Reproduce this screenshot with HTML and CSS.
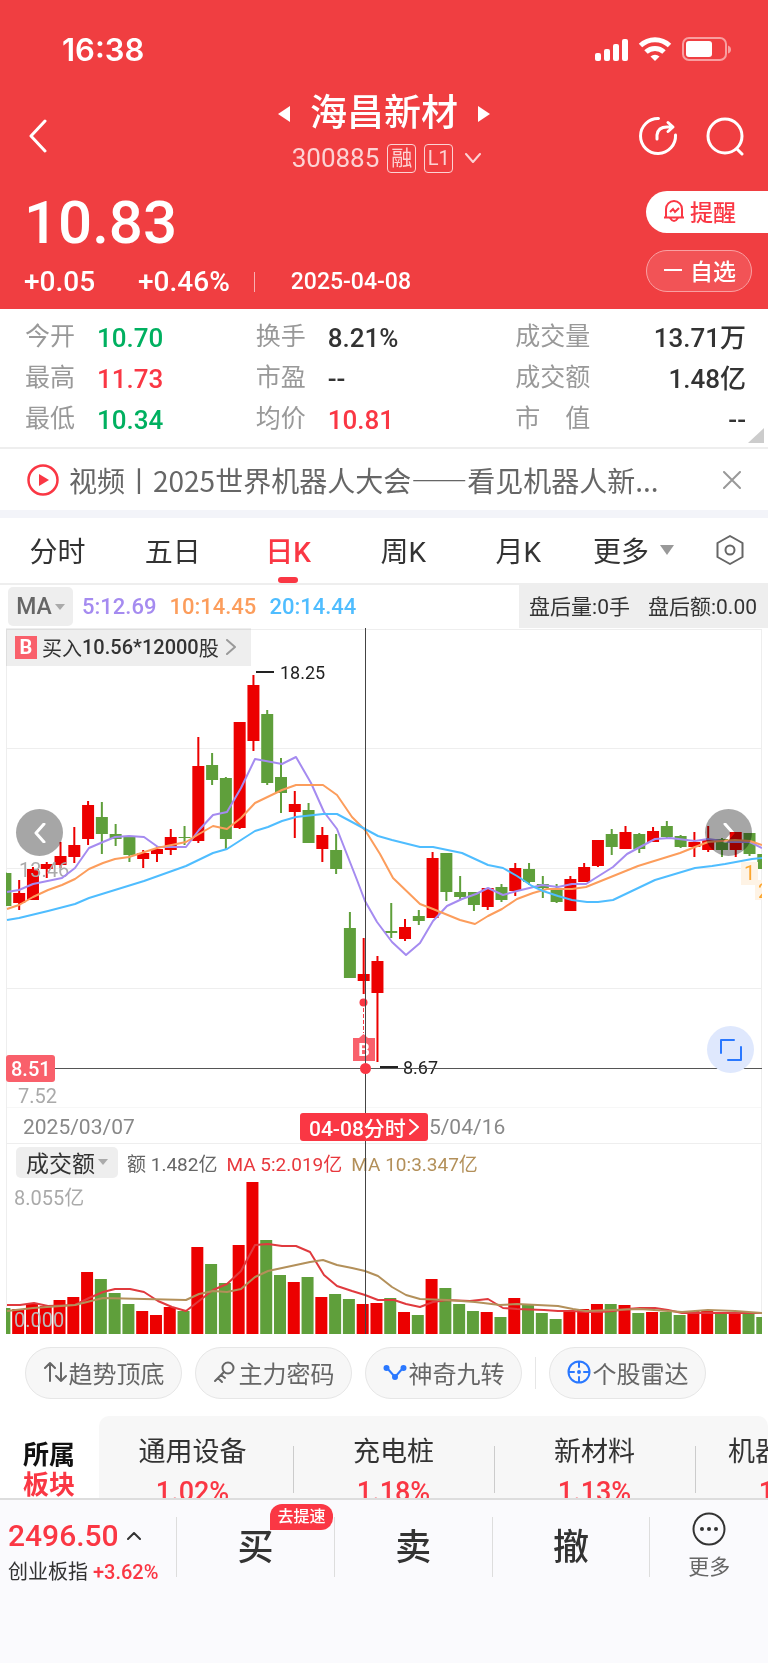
FILE: index.html
```html
<!DOCTYPE html>
<html lang="zh-CN">

<head>
    <meta charset="UTF-8">
    <meta name="viewport" content="width=device-width, initial-scale=1.0">
    <link rel="stylesheet" href="styles.css">
    <title>海昌新材 300885</title>
</head>

<body>
    <header class="top">
        <div class="status">
            <span class="clock">16:38</span>
            <svg class="status-icons" width="138" height="28" viewBox="0 0 138 28" fill="#fff">
                <rect x="1" y="18" width="6" height="8" rx="2" />
                <rect x="10" y="14" width="6" height="12" rx="2" />
                <rect x="19" y="9" width="6" height="17" rx="2" />
                <rect x="28" y="4" width="6" height="22" rx="2" />
                <g fill="none" stroke="#fff" stroke-width="5">
                    <path d="M46.500 10.500a21 21 0 0 1 29 0" />
                    <path d="M52 17a13 13 0 0 1 18 0" />
                </g>
                <path d="M56.500 21.500a7 7 0 0 1 9 0l-4.500 4.500z" />
                <rect x="89" y="3" width="43" height="22" rx="6" fill="none" stroke="#fff" stroke-opacity=".5" stroke-width="2" />
                <rect x="92" y="6" width="26" height="16" rx="3" />
                <path d="M134 10.500v8q3-1 3-4t-3-4z" fill-opacity=".5" />
            </svg>
        </div>

        <nav class="nav">
            <button class="icon-btn back" type="button" aria-label="返回">
                <svg width="20" height="34" viewBox="0 0 20 34"><path d="M17 2L3 17l14 15" /></svg>
            </button>
            <div class="stock">
                <h1>
                    <svg width="14" height="18" viewBox="0 0 14 18"><path d="M13 1v16L1 9z" /></svg>
                    海昌新材
                    <svg width="14" height="18" viewBox="0 0 14 18"><path d="M1 1v16l12-8z" /></svg>
                </h1>
                <div class="code">
                    <span>300885</span>
                    <span class="tag">融</span>
                    <span class="tag tag-l1">L1</span>
                    <svg width="16" height="10" viewBox="0 0 16 10"><path d="M1 1l7 8 7-8" /></svg>
                </div>
            </div>
            <div class="nav-right">
                <button class="icon-btn" type="button" aria-label="分享">
                    <svg width="40" height="40" viewBox="0 0 40 40"><path d="M20.500 2.500A17.500 17.500 0 1 0 37.500 19M19 23v-4q1-8 10-8h5M30 6.500l5 4.500-5 4.500" /></svg>
                </button>
                <button class="icon-btn" type="button" aria-label="搜索">
                    <svg width="40" height="40" viewBox="0 0 40 40"><circle cx="20" cy="20" r="17" /><path d="M32 33l5 5" /></svg>
                </button>
            </div>
        </nav>

        <section class="quote">
            <div>
                <div class="price">10.83</div>
                <div class="change">
                    <span>+0.05</span>
                    <span>+0.46%</span>
                    <time datetime="2025-04-08">2025-04-08</time>
                </div>
            </div>
            <div class="quote-btns">
                <button class="alert-btn" type="button">
                    <svg width="22" height="24" viewBox="0 0 22 24"><path d="M3 18V10a8 8 0 0 1 16 0v8M1 18.500h20M7 19q4 6 8 0M7 13l3-3 2 3 4-4" /></svg>
                    提醒
                </button>
                <button class="watch-btn" type="button"><i></i>自选</button>
            </div>
        </section>
    </header>

    <section class="stats">
        <dl>
            <dt>今开</dt><dd class="green">10.70</dd>
            <dt>最高</dt><dd class="red">11.73</dd>
            <dt>最低</dt><dd class="green">10.34</dd>
        </dl>
        <dl>
            <dt>换手</dt><dd>8.21%</dd>
            <dt>市盈</dt><dd>--</dd>
            <dt>均价</dt><dd class="red">10.81</dd>
        </dl>
        <dl class="wide">
            <dt>成交量</dt><dd>13.71万</dd>
            <dt>成交额</dt><dd>1.48亿</dd>
            <dt>市　值</dt><dd>--</dd>
        </dl>
    </section>

    <section class="news">
        <svg width="32" height="32" viewBox="0 0 32 32"><circle cx="16" cy="16" r="14.500" fill="none" stroke="#fa3744" stroke-width="2.500" /><path d="M12 10v12l10-6z" fill="#fa3744" /></svg>
        <a href="#news">视频丨2025世界机器人大会——看见机器人新...</a>
        <button class="icon-btn" type="button" aria-label="关闭">
            <svg width="18" height="18" viewBox="0 0 18 18"><path d="M1 1l16 16M17 1L1 17" /></svg>
        </button>
    </section>

    <nav class="tabs">
        <button type="button">分时</button>
        <button type="button">五日</button>
        <button type="button" class="active">日K</button>
        <button type="button">周K</button>
        <button type="button">月K</button>
        <button type="button">更多<i class="caret"></i></button>
        <button type="button" aria-label="设置">
            <svg width="30" height="32" viewBox="0 0 30 32"><path d="M15 2l12.500 7v14L15 30 2.500 23V9z" /><circle cx="15" cy="16" r="4.500" /></svg>
        </button>
    </nav>

    <div class="ma-row">
        <button class="pick" type="button">MA<i class="caret small"></i></button>
        <span class="ma5">5:12.69</span>
        <span class="ma10">10:14.45</span>
        <span class="ma20">20:14.44</span>
        <div class="after"><span>盘后量:0手</span><span>盘后额:0.00</span></div>
    </div>

    <section class="chart">
        <div class="panel">
            <button class="trade" type="button">
                <b>B</b>买入<strong>10.56*12000</strong>股
                <svg width="10" height="16" viewBox="0 0 10 16"><path d="M1 1l8 7-8 7" /></svg>
            </button>
            <button class="round prev" type="button" aria-label="上一段">
                <svg width="12" height="20" viewBox="0 0 12 20"><path d="M10 1L2 10l8 9" /></svg>
            </button>
            <button class="round next" type="button" aria-label="下一段">
                <svg width="12" height="20" viewBox="0 0 12 20"><path d="M2 1l8 9-8 9" /></svg>
            </button>
            <svg class="plot" id="kline" viewBox="0 0 768 480">
                <defs>
                    <clipPath id="clip"><rect x="6" y="0" width="756" height="480" /></clipPath>
                </defs>
                <g class="grid">
                    <path d="M6 1.500H762M6 120.500H762M6 240.500H762M6 360.500H762M6 480H762M6.500 1V480M761.500 1V480" />
                </g>
                <g id="candles" clip-path="url(#clip)"></g>
                <text class="axis" x="19" y="249">13.46</text>
                <text class="axis" x="18" y="475">7.52</text>
                <g class="lines" clip-path="url(#clip)">
                    <polyline stroke="#a58bf0" points="7,264 19,262 33,256 62,250 75,240 89,220 103,214 115,209 129,208 144,209 158,219 186,219 199,202 213,187 227,184 241,160 255,131 282,136 296,129 311,155 324,184 337,201 357,252 365,273 377,294 392,314 406,327 420,315 433,293 447,278 462,271 476,266 488,260 503,267 517,263 542,257 558,259 572,256 586,256 613,239 627,226 655,211 670,210 695,213 708,211 730,214 750,214 762,220" />
                    <polyline stroke="#fc9d5c" points="7,281 19,277 33,269 48,262 62,257 75,251 89,241 103,235 115,231 129,229 157,220 186,214 199,206 213,198 227,201 241,190 255,175 282,162 296,157 323,157 337,167 352,189 365,202 380,226 393,250 420,276 433,281 460,292 475,296 488,288 502,281 517,271 533,265 547,261 572,261 586,259 638,238 680,225 695,219 708,214 735,212 750,213 762,217" />
                    <polyline stroke="#4fbdff" points="7,292 19,290 48,283 75,276 89,270 144,253 172,243 186,238 213,225 227,221 241,212 255,203 268,199 282,193 296,189 323,186 337,186 352,194 365,201 378,208 392,212 420,219 433,219 462,225 488,237 503,240 517,248 532,258 543,263 558,268 572,272 587,274 598,274 613,272 655,252 695,240 712,238 725,236 752,231 762,230" />
                </g>
                <g class="marks">
                    <path d="M256 44h18M380 439h18" />
                    <text x="280" y="51">18.25</text>
                    <text x="403" y="446">8.67</text>
                </g>
                <g class="tips" clip-path="url(#clip)">
                    <rect x="741" y="234" width="17" height="23" />
                    <text x="744" y="252">1</text>
                    <rect x="755" y="252" width="17" height="20" />
                    <text x="758" y="270">2</text>
                </g>
                <path d="M363.500 374V405" stroke="#fa3744" stroke-dasharray="4 2" />
                <circle cx="363.500" cy="374.500" r="4" fill="#fa3744" />
                <path d="M353 410h6l4.500-4 4.500 4h7v23h-22z" fill="#f9606b" />
                <text class="b-mark" x="364" y="428">B</text>
                <path d="M6 440.500H762" stroke="#555" />
                <rect x="6" y="427" width="49" height="27" rx="3" fill="#f9606b" />
                <text class="level" x="11" y="448">8.51</text>
            </svg>
            <button class="round expand" type="button" aria-label="全屏">
                <svg width="22" height="22" viewBox="0 0 22 22"><path d="M1 14V1h13M8 21h13V8" /></svg>
            </button>
        </div>

        <div class="dates">
            <span>2025/03/07</span>
            <button class="day" type="button">04-08分时<svg width="10" height="16" viewBox="0 0 10 16"><path d="M1 1l8 7-8 7" /></svg></button>
            <span>5/04/16</span>
        </div>

        <div class="vol-head">
            <button class="pick" type="button">成交额<i class="caret small"></i></button>
            <span>额 1.482亿</span>
            <span class="vma5">MA 5:2.019亿</span>
            <span class="vma10">MA 10:3.347亿</span>
        </div>

        <svg class="plot" id="volume" viewBox="0 0 768 154">
            <path class="grid" d="M6.500 0V154M761.500 0V154" />
            <g id="bars" clip-path="url(#clip)"></g>
            <g class="lines" clip-path="url(#clip)">
                <polyline stroke="#e03a3e" points="7,125 20,125 34,123 48,126 75,125 89,118 103,112 115,109 130,109 144,112 158,121 172,127 186,131 199,121 213,110 227,104 241,91 255,65 268,64 282,66 296,66 310,72 324,95 337,106 352,111 365,115 378,120 394,120 406,124 420,127 433,122 447,120 470,121 488,119 503,128 517,129 544,130 558,131 573,131 586,132 600,132 613,131 627,129 640,128 655,128 668,130 682,133 708,133 762,133" />
                <polyline stroke="#b3905a" points="7,131 33,128 75,125 103,118 144,119 186,120 199,114 213,111 227,112 241,109 255,97 268,91 296,85 310,82 323,80 337,85 352,88 365,91 378,96 392,107 406,115 420,119 447,120 475,122 500,125 517,124 558,126 573,129 586,131 613,130 640,129 682,132 708,130 735,131 762,133" />
            </g>
            <text class="axis" x="14" y="25">8.055亿</text>
            <text class="axis light" x="14" y="147">0.000</text>
        </svg>
        <div class="crosshair"></div>
        <i class="cross-dot"></i>
    </section>

    <div class="chips">
        <button type="button">
            <svg width="24" height="24" viewBox="0 0 24 24"><path d="M7 21V3M2 8l5-5 5 5M18 3v18M13 16l5 5 5-5" /></svg>趋势顶底
        </button>
        <button type="button">
            <svg width="24" height="24" viewBox="0 0 24 24"><circle cx="15" cy="8" r="5.500" /><path d="M11 12L2 21M5 18l4 4M8 15l4 3" /></svg>主力密码
        </button>
        <button type="button">
            <svg class="blue" width="24" height="24" viewBox="0 0 24 24"><path d="M4 8l8 9 8-9" /><g fill="#2a78ff"><circle cx="3.500" cy="8" r="2" /><circle cx="12" cy="17" r="2" /><circle cx="20.500" cy="8" r="2" /></g></svg>神奇九转
        </button>
        <span class="bar"></span>
        <button type="button">
            <svg class="blue" width="24" height="24" viewBox="0 0 24 24"><circle cx="12" cy="12" r="10.500" /><path d="M12 2v5M12 17v5M2 12h5M17 12h5" /><circle cx="12" cy="12" r="1" fill="#2a78ff" /></svg>个股雷达
        </button>
    </div>

    <section class="sectors">
        <h2>所属<em>板块</em></h2>
        <ul>
            <li><a href="#s1">通用设备</a><span>1.02%</span></li>
            <li><a href="#s2">充电桩</a><span>1.18%</span></li>
            <li><a href="#s3">新材料</a><span>1.13%</span></li>
            <li><a href="#s4">机器人概念</a><span>1.25%</span></li>
        </ul>
    </section>

    <footer class="bottom">
        <div class="index">
            <div class="index-value">2496.50<svg width="14" height="8" viewBox="0 0 14 8"><path d="M1 7l6-6 6 6" /></svg></div>
            <div class="index-name">创业板指 <span>+3.62%</span></div>
        </div>
        <button type="button">买<span class="badge">去提速</span></button>
        <button type="button">卖</button>
        <button type="button">撤</button>
        <button type="button" class="more">
            <svg width="34" height="34" viewBox="0 0 34 34"><circle cx="17" cy="17" r="15.500" fill="none" stroke="#333" stroke-width="2" /><g fill="#333"><circle cx="10" cy="17" r="2" /><circle cx="17" cy="17" r="2" /><circle cx="24" cy="17" r="2" /></g></svg>
            更多
        </button>
    </footer>

    <script src="script.js"></script>
</body>

</html>
```

FILE: styles.css
```css
html {
    box-sizing: border-box;
}

*,
*::before,
*::after {
    margin: 0;
    padding: 0;
    box-sizing: inherit;
}

body {
    display: flex;
    flex-direction: column;
    min-height: 100vh;
    background-color: #fff;
    color: #333;
    font-family: Roboto, "Noto Sans CJK SC", sans-serif;
    overflow-x: hidden;
}

button {
    border: none;
    background: none;
    color: inherit;
    font: inherit;
    white-space: nowrap;
}

a {
    color: inherit;
    text-decoration: none;
}

svg {
    display: block;
    flex: none;
}

/* header */

.top {
    background-color: #f03e41;
    color: #fff;
}

.status {
    display: flex;
    justify-content: space-between;
    align-items: center;
    height: 92px;
    padding: 6px 36px 0 62px;
}

.clock {
    font-family: Inter, sans-serif;
    font-size: 31px;
    font-weight: 600;
}

.nav {
    display: grid;
    grid-template-columns: 1fr auto 1fr;
    align-items: center;
    height: 88px;
    padding: 0 23px 0 28px;
}

.icon-btn svg,
.code svg,
.trade svg,
.day svg,
.round svg,
.chips svg,
.index svg {
    fill: none;
    stroke: currentColor;
    stroke-width: 3;
    stroke-linecap: round;
    stroke-linejoin: round;
}

.back {
    justify-self: start;
}

.nav-right {
    display: flex;
    justify-content: flex-end;
    gap: 27px;
}

.stock {
    display: flex;
    flex-direction: column;
    align-items: center;
    gap: 9px;
    padding-bottom: 5px;
}

.stock h1 {
    display: flex;
    align-items: center;
    gap: 19px;
    margin-right: 5px;
    font-size: 37px;
    font-weight: 500;
    line-height: 40px;
}

.stock h1 svg {
    fill: #fff;
}

.code {
    display: flex;
    align-items: center;
    gap: 8px;
    height: 30px;
    color: #fcd3d4;
    font-size: 26px;
}

.code svg {
    margin-left: 4px;
    stroke-width: 2;
}

.tag {
    width: 29px;
    height: 29px;
    border: 1px solid #fcd3d4;
    border-radius: 4px;
    font-size: 21px;
    line-height: 27px;
    text-align: center;
}

.tag-l1 {
    font-size: 20px;
}

.quote {
    display: flex;
    justify-content: space-between;
    height: 129px;
    padding-left: 24px;
}

.price {
    margin-top: 9px;
    font-size: 60px;
    font-weight: 500;
    line-height: 68px;
}

.change {
    display: flex;
    align-items: center;
    margin-top: 9px;
    font-size: 28px;
    font-weight: 500;
    line-height: 32px;
}

.change span + span {
    margin-left: 43px;
}

.change time {
    margin-left: 24px;
    padding-left: 36px;
    border-left: 1px solid #f9b0b1;
    font-size: 23px;
    line-height: 20px;
}

.quote-btns {
    display: flex;
    flex-direction: column;
    gap: 17px;
    padding-top: 11px;
}

.quote-btns button {
    display: flex;
    align-items: center;
    height: 42px;
    padding: 0 0 2px 17px;
    font-size: 23px;
    font-weight: 500;
}

.alert-btn {
    width: 122px;
    gap: 5px;
    border-radius: 21px 0 0 21px;
    background-color: #fff;
    color: #fa3744;
}

.alert-btn svg {
    fill: none;
    stroke: currentColor;
    stroke-width: 2;
}

.watch-btn {
    width: 106px;
    gap: 8px;
    border: 1px solid #f9a0a2;
    border-radius: 21px;
    background-color: #f25356;
}

.watch-btn i {
    width: 18px;
    height: 2px;
    background-color: #fff;
}

/* stats */

.stats {
    position: relative;
    display: grid;
    grid-template-columns: 32% 36% 1fr;
    padding: 8px 22px 7px 25px;
    border-bottom: 2px solid #eee;
}

.stats::after {
    content: "";
    position: absolute;
    right: 4px;
    bottom: 4px;
    border-left: 16px solid transparent;
    border-bottom: 15px solid #ccc;
}

.stats dl {
    display: grid;
    grid-template-columns: auto 1fr;
    column-gap: 22px;
    line-height: 41px;
}

.stats dt {
    height: 41px;
    color: #999;
    font-size: 25px;
    line-height: 39px;
}

.stats dd {
    height: 41px;
    font-size: 26px;
    font-weight: 500;
    line-height: 43px;
}

.wide dd {
    text-align: right;
}

.green {
    color: #00b060;
}

.red {
    color: #fa3744;
}

/* news */

.news {
    display: flex;
    align-items: center;
    height: 69px;
    padding: 0 27px;
    border-bottom: 8px solid #f3f4f9;
}

.news a {
    flex: 1;
    margin-left: 10px;
    overflow: hidden;
    color: #666;
    font-family: "Noto Sans CJK SC", sans-serif;
    font-size: 28px;
    line-height: 40px;
    white-space: nowrap;
}

.news button {
    color: #999;
}

.news button svg {
    stroke-width: 2;
}

/* period tabs */

.tabs {
    display: grid;
    grid-template-columns: repeat(6, 15fr) 10fr;
    height: 67px;
    border-bottom: 2px solid #eee;
}

.tabs button {
    position: relative;
    display: flex;
    justify-content: center;
    align-items: center;
    padding-bottom: 2px;
    font-size: 28px;
}

.tabs svg {
    fill: none;
    stroke: #666;
    stroke-width: 2;
    stroke-linejoin: round;
}

.tabs .active {
    color: #fa3744;
    font-weight: 500;
}

.active::after {
    content: "";
    position: absolute;
    bottom: 0;
    width: 20px;
    height: 6px;
    border-radius: 3px;
    background-color: #fa3744;
}

.caret {
    margin-left: 11px;
    border: 7px solid transparent;
    border-top: 10px solid #999;
    border-bottom: none;
}

.small {
    margin-left: 3px;
    border-width: 5px;
    border-top: 6px solid #aaa;
    border-bottom: none;
}

/* MA row */

.ma-row {
    display: flex;
    align-items: center;
    gap: 13px;
    height: 43px;
    padding-left: 8px;
    font-size: 22px;
    font-weight: 500;
}

.pick {
    display: flex;
    align-items: center;
    justify-content: center;
    border-radius: 5px;
    background-color: #eee;
}

.ma-row .pick {
    width: 65px;
    height: 39px;
    margin-right: -4px;
    color: #666;
    font-size: 23px;
}

.ma5 {
    color: #a58bf0;
}

.ma10 {
    color: #fc9d5c;
}

.ma20 {
    color: #4fbdff;
}

.after {
    display: flex;
    align-self: stretch;
    align-items: center;
    gap: 18px;
    margin-left: auto;
    padding: 0 11px 3px 10px;
    background-color: #eee;
    font-size: 21px;
    font-weight: 400;
}

/* chart */

.chart,
.panel {
    position: relative;
}

.plot {
    width: 100%;
    height: auto;
}

#kline {
    position: relative;
    mix-blend-mode: multiply;
    pointer-events: none;
}

.grid,
.grid path {
    fill: none;
    stroke: #eee;
}

.lines polyline {
    fill: none;
    stroke-width: 2;
    stroke-linejoin: round;
}

.axis {
    fill: #aaa;
    font-size: 20px;
}

.light {
    fill: #bbb;
}

.marks path {
    stroke: #222;
    stroke-width: 2;
}

.marks text {
    fill: #222;
    font-size: 18px;
}

.tips rect {
    fill: #fef3e5;
}

.tips text {
    fill: #fca62f;
    font-size: 20px;
}

.b-mark {
    fill: #fff;
    font-size: 18px;
    font-weight: 700;
    text-anchor: middle;
}

.level {
    fill: #fff;
    font-size: 20px;
    font-weight: 500;
}

.trade {
    position: absolute;
    top: 0;
    left: 6px;
    display: flex;
    align-items: center;
    width: 245px;
    height: 38px;
    padding-left: 9px;
    background-color: #eee;
    font-size: 20px;
}

.trade b {
    width: 22px;
    margin-right: 5px;
    background-color: #f9606b;
    color: #fff;
    line-height: 23px;
    text-align: center;
}

.trade strong {
    font-weight: 500;
}

.trade svg {
    margin-left: 7px;
    color: #999;
    stroke-width: 2;
}

.round {
    position: absolute;
    top: 181px;
    display: flex;
    justify-content: center;
    align-items: center;
    width: 47px;
    height: 47px;
    border-radius: 50%;
    background-color: #a6a6a6;
    color: #fff;
}

.prev {
    left: 16px;
}

.next {
    right: 16px;
}

.expand {
    top: auto;
    right: 14px;
    bottom: 35px;
    background-color: #dfe8fd;
    color: #2a78ff;
}

.expand svg {
    stroke-width: 2;
}

.dates {
    display: flex;
    align-items: center;
    height: 36px;
    margin: 0 6px;
    padding: 2px 0 0 16px;
    border: 1px solid #eee;
    border-top: none;
    color: #888;
    font-size: 21px;
}

.day {
    position: relative;
    z-index: 2;
    display: flex;
    align-items: center;
    justify-content: center;
    gap: 3px;
    width: 128px;
    height: 28px;
    margin: 0 1px 0 auto;
    border-radius: 3px;
    background-color: #fa3744;
    color: #fff;
    font-size: 21px;
    font-weight: 500;
}

.day svg {
    stroke-width: 2;
}

.day + span {
    width: 45%;
}

.vol-head {
    display: flex;
    align-items: center;
    gap: 9px;
    height: 36px;
    margin: 0 6px;
    padding-left: 9px;
    border: 1px solid #eee;
    border-width: 0 1px;
    color: #666;
    font-size: 19px;
}

.vol-head .pick {
    width: 102px;
    height: 31px;
    color: #333;
    font-size: 23px;
}

.vma5 {
    color: #e8383d;
}

.vma10 {
    color: #b3905a;
}

.crosshair {
    position: absolute;
    top: 0;
    bottom: 0;
    left: 47.5%;
    width: 1px;
    background-color: #444;
}

.cross-dot {
    position: absolute;
    top: 435px;
    left: 47.5%;
    width: 11px;
    height: 11px;
    margin-left: -5px;
    border-radius: 50%;
    background-color: #fa3744;
}

/* tool chips */

.chips {
    display: flex;
    align-items: center;
    gap: 13px;
    padding: 13px 25px 17px;
}

.chips button {
    display: flex;
    align-items: center;
    justify-content: center;
    gap: 2px;
    width: 157px;
    height: 52px;
    padding-bottom: 2px;
    border: 1px solid #e6e6e6;
    border-radius: 26px;
    background-color: #f7f7f7;
    color: #666;
    font-size: 24px;
}

.chips svg {
    stroke-width: 2;
}

.chips .blue {
    color: #2a78ff;
}

.bar {
    width: 1px;
    height: 32px;
    background-color: #e6e6e6;
}

/* sectors */

.sectors {
    display: flex;
    height: 82px;
    overflow: hidden;
}

.sectors h2 {
    flex: none;
    width: 99px;
    padding: 24px 24px 0 23px;
    color: #111;
    font-size: 26px;
    line-height: 30px;
}

.sectors em {
    color: #fa3744;
    font-style: normal;
}

.sectors ul {
    display: flex;
    flex: 1;
    min-width: 0;
    height: 120px;
    border-radius: 10px;
    background-color: #f7f7f7;
    overflow: hidden;
    list-style: none;
}

.sectors li {
    position: relative;
    flex: none;
    width: 201px;
    padding: 16px 2px 0 0;
    text-align: center;
}

.sectors li:first-child {
    width: 195px;
    padding-right: 8px;
}

.sectors li::after {
    content: "";
    position: absolute;
    top: 30px;
    right: 0;
    width: 1px;
    height: 47px;
    background-color: #ccc;
}

.sectors a,
.sectors span {
    display: block;
    font-size: 27px;
    line-height: 40px;
}

.sectors span {
    color: #fa3744;
    font-weight: 500;
}

/* bottom bar */

.bottom {
    display: flex;
    flex: 1;
    align-items: flex-start;
    padding-top: 17px;
    border-top: 2px solid #ddd;
    background-color: #fafafd;
}

.index {
    width: 176px;
    padding-left: 8px;
    white-space: nowrap;
}

.index-value {
    display: flex;
    align-items: center;
    gap: 8px;
    color: #fa3744;
    font-size: 30px;
    font-weight: 500;
    line-height: 38px;
}

.index svg {
    color: #333;
    stroke-width: 2;
}

.index-name {
    font-size: 20px;
    line-height: 34px;
}

.index-name span {
    color: #fa3744;
    font-weight: 500;
}

.bottom button {
    position: relative;
    flex: 4;
    height: 60px;
    border-left: 1px solid #ddd;
    font-size: 36px;
    font-weight: 500;
    line-height: 62px;
}

.badge {
    position: absolute;
    top: -13px;
    left: 93px;
    width: 63px;
    height: 26px;
    border-radius: 12px 12px 12px 0;
    background-color: #fa3744;
    color: #fff;
    font-size: 16px;
    line-height: 25px;
}

.bottom .more {
    display: flex;
    flex: 3;
    flex-direction: column;
    align-items: center;
    color: #666;
    font-size: 21px;
    font-weight: 400;
    line-height: 24px;
}

.more svg {
    margin: -5px 0 9px;
}
```

FILE: script.js
```js
var RED = "#ec0000";
var GREEN = "#5f9f3b";
var STEP = 13.78;

// direction, high, body top, body bottom, low, volume
var days = [
    ["g", 244, 245, 278, 278, 26], ["r", 252, 265, 275, 282, 25], ["r", 239, 241, 272, 272, 30],
    ["r", 234, 236, 241, 250, 28], ["r", 214, 228, 237, 240, 34], ["r", 199, 217, 229, 235, 37],
    ["r", 173, 177, 211, 217, 62], ["g", 174, 189, 206, 226, 55], ["g", 196, 206, 211, 218, 41],
    ["g", 208, 209, 227, 234, 30], ["r", 222, 225, 231, 240, 23], ["r", 218, 221, 226, 234, 19],
    ["r", 201, 209, 222, 227, 27], ["g", 198, 209, 210, 217, 23], ["r", 109, 138, 213, 215, 87],
    ["g", 125, 137, 152, 157, 70], ["g", 149, 150, 211, 221, 51], ["r", 94, 94, 200, 201, 89],
    ["r", 47, 57, 113, 123, 152], ["g", 82, 86, 155, 157, 94], ["g", 130, 149, 165, 185, 59],
    ["r", 163, 176, 184, 210, 52], ["g", 175, 182, 215, 215, 57], ["r", 199, 207, 221, 234, 37],
    ["g", 206, 222, 241, 246, 40], ["g", 284, 300, 350, 350, 35], ["r", 310, 346, 353, 366, 30],
    ["r", 328, 333, 365, 434, 31], ["g", 275, 303, 305, 310, 36], ["r", 291, 299, 311, 313, 22],
    ["g", 282, 288, 293, 297, 19], ["r", 224, 230, 290, 290, 55], ["g", 225, 225, 264, 273, 46],
    ["g", 248, 264, 269, 272, 30], ["g", 264, 264, 277, 283, 23], ["r", 260, 260, 279, 282, 22],
    ["g", 256, 259, 272, 274, 17], ["r", 235, 240, 263, 268, 36], ["g", 235, 241, 254, 257, 29],
    ["g", 248, 256, 260, 270, 21], ["g", 256, 260, 274, 275, 15], ["r", 248, 251, 283, 283, 22],
    ["r", 235, 239, 254, 254, 25], ["r", 212, 212, 238, 239, 30], ["g", 201, 206, 219, 227, 30],
    ["r", 198, 204, 221, 221, 29], ["g", 205, 206, 221, 225, 21], ["r", 199, 203, 214, 214, 22],
    ["g", 193, 198, 209, 211, 22], ["g", 207, 208, 219, 220, 19], ["r", 204, 214, 219, 229, 23],
    ["r", 198, 211, 222, 224, 24], ["g", 210, 211, 222, 229, 21], ["r", 204, 204, 222, 229, 21],
    ["g", 205, 205, 226, 228, 21], ["g", 226, 226, 241, 241, 17]
];

function rect(parent, x, y, w, h, color) {
    var el = document.createElementNS("http://www.w3.org/2000/svg", "rect");
    el.setAttribute("x", x);
    el.setAttribute("y", y);
    el.setAttribute("width", w);
    el.setAttribute("height", h);
    el.setAttribute("fill", color);
    parent.appendChild(el);
}

var candles = document.getElementById("candles");
var bars = document.getElementById("bars");

days.forEach(function (d, i) {
    var color = d[0] == "r" ? RED : GREEN;
    var x = 5.4 + i * STEP;
    rect(candles, x - 1, d[1], 2, d[4] - d[1], color);
    rect(candles, x - 6, d[2], 12, d[3] - d[2], color);
    rect(bars, x - 7, 154 - d[5], 12, d[5], color);
});
```
